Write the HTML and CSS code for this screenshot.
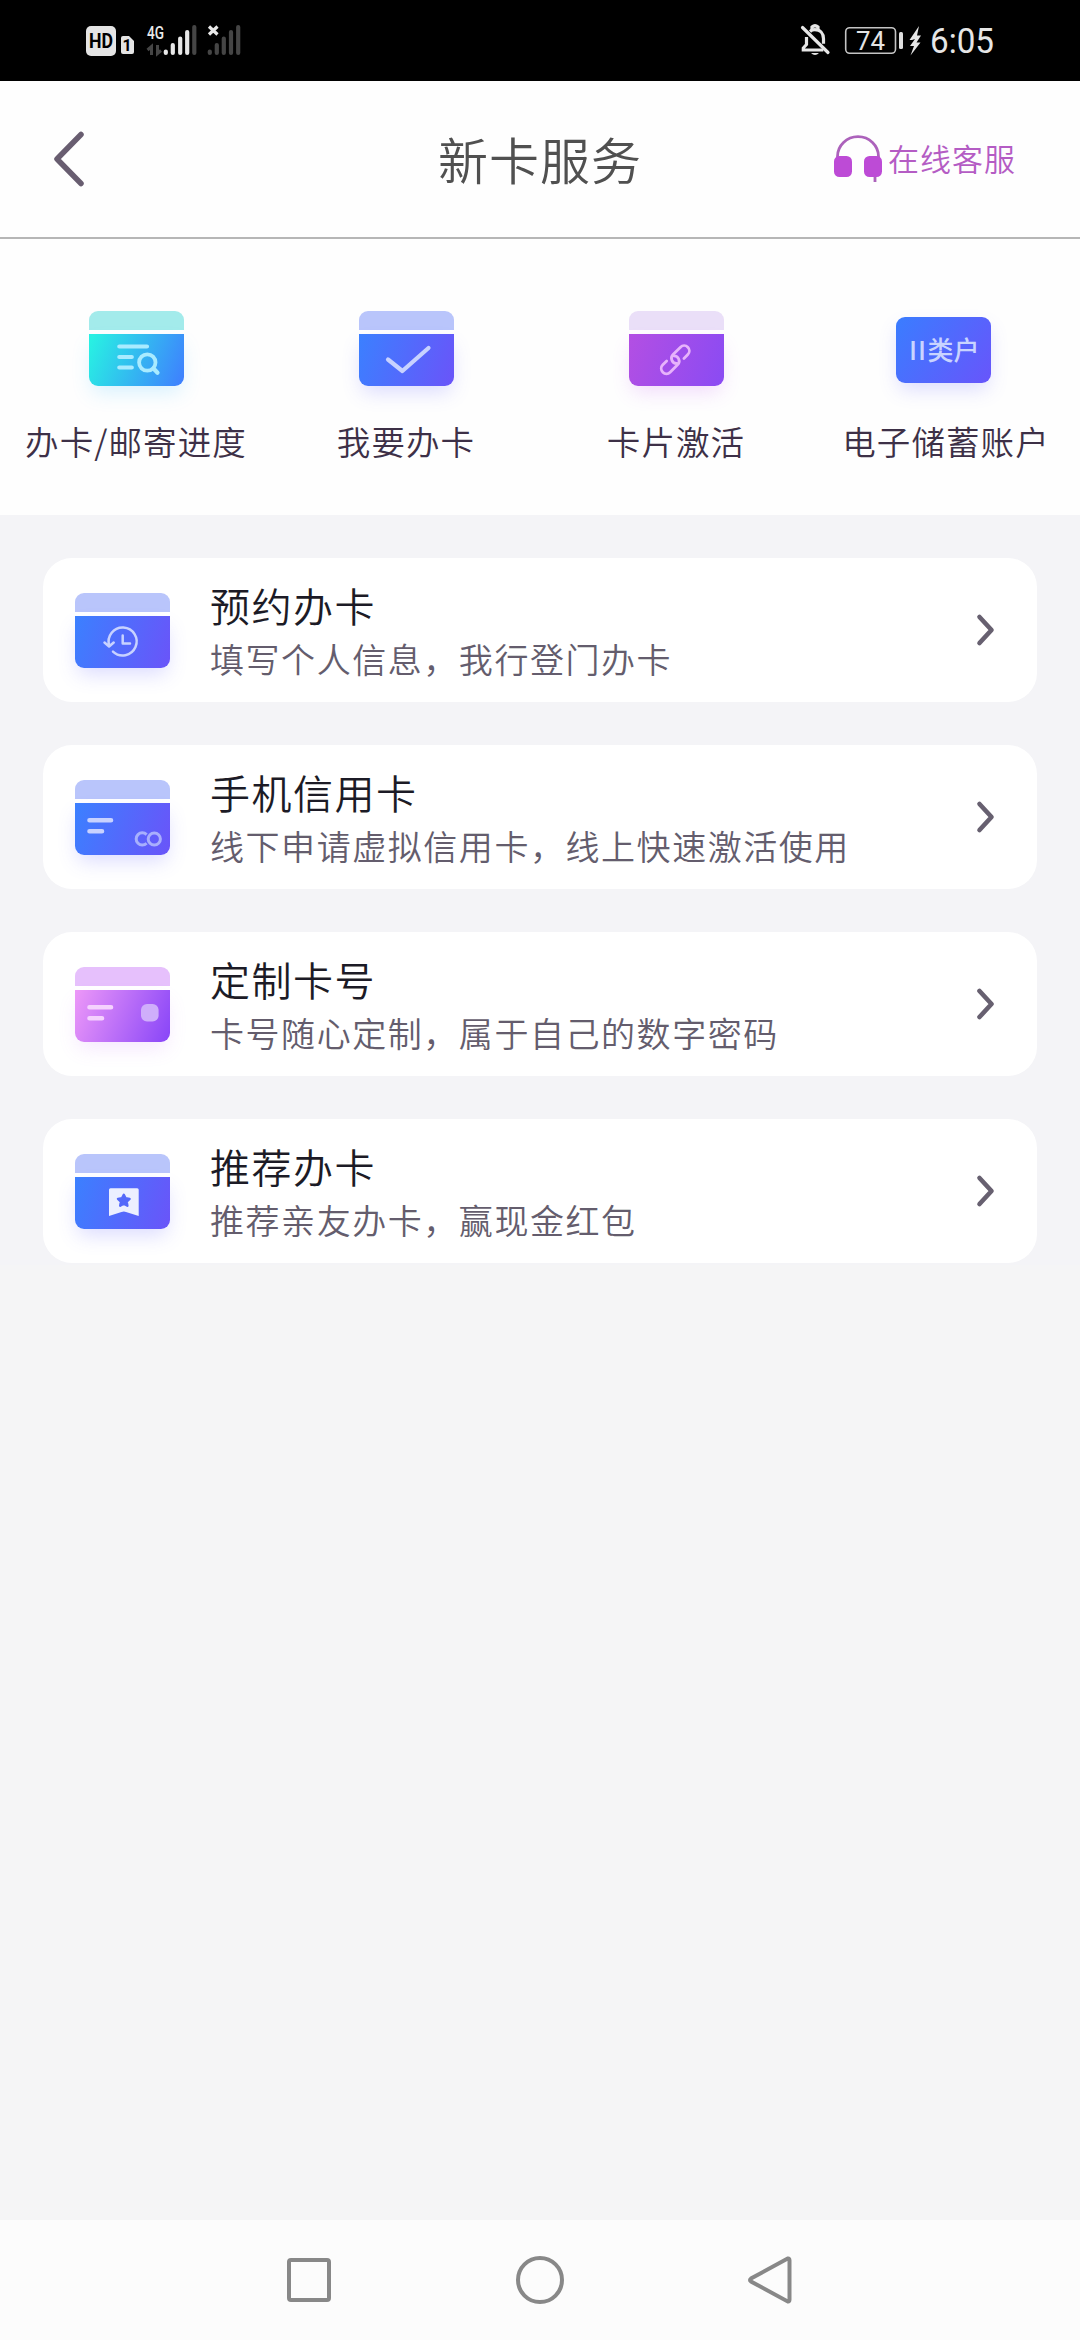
FILE: index.html
```html
<!DOCTYPE html>
<html lang="zh-CN">
<head>
<meta charset="utf-8">
<title>新卡服务</title>
<link rel="stylesheet" href="styles.css">
</head>
<body>
<div class="screen">
  <div class="status">
    <svg class="status-left" width="160" height="40" viewBox="84 20 160 40">
      <rect x="86" y="26" width="30" height="30" rx="5" fill="#e4e4e4"/>
      <text x="101" y="48" class="hd" text-anchor="middle" textLength="24" lengthAdjust="spacingAndGlyphs">HD</text>
      <path d="M123 36h6l5 5v11a2 2 0 0 1-2 2h-9a2 2 0 0 1-2-2V38a2 2 0 0 1 2-2z" fill="#e4e4e4"/>
      <text x="127" y="51" class="sim" text-anchor="middle">1</text>
      <text x="147" y="38.500" class="net" textLength="17" lengthAdjust="spacingAndGlyphs">4G</text>
      <g stroke="#e8e8e8" stroke-width="4.200" stroke-linecap="round">
        <path d="M165.800 51.500v1.500M172.800 45v8M180.200 38.500v14.500M187.200 32v21"/>
        <path d="M194.300 27v26M209.800 51.500v1.500M216.800 45v8M223.800 38.500v14.500M231 32v21M238.200 27v26" stroke="#454545"/>
      </g>
      <path d="M147.500 50l4-3.500v8.500M157.500 45v8.500l3.500-3" fill="none" stroke="#454545" stroke-width="3"/>
      <path d="M209 26.500l8.500 8M217.500 26.500l-8.500 8" stroke="#e8e8e8" stroke-width="3.200"/>
    </svg>
    <svg class="status-right" width="204" height="40" viewBox="796 20 204 40">
      <g fill="none" stroke="#e6e6e6" stroke-width="3.200">
        <path d="M806.500 37v7.500l-3.200 3.500v2h20M810 31.500c1.500-1.400 3-1.800 4.800-1.800 5.500 0 8.700 4 8.700 9v5"/>
        <path d="M802.500 27.500l25.500 25" stroke-linecap="round"/>
        <path d="M812 30v-3q3-2.500 6 0v3" />
      </g>
      <path d="M811 53h8q-4 4-8 0z" fill="#e6e6e6"/>
      <rect x="845.700" y="27.700" width="49.800" height="25.600" rx="4" fill="none" stroke="#c4c4c4" stroke-width="1.600"/>
      <text x="856" y="49.500" class="battery" textLength="29" lengthAdjust="spacingAndGlyphs">74</text>
      <rect x="899" y="32" width="4" height="17" rx="1.500" fill="#dedede"/>
      <path d="M919 26l-9.500 14h5l-2.500 0 3-1-5 7h4l-3.500 9.500 10-13h-4l4.500-7h-4z" fill="#e6e6e6"/>
      <text x="930" y="53" class="time" textLength="64" lengthAdjust="spacingAndGlyphs">6:05</text>
    </svg>
  </div>

  <header class="header">
    <svg class="back" width="36" height="60" viewBox="0 0 36 60"><path d="M30 5.500L6 30l24 24.500"/></svg>
    <h1 class="page-title">新卡服务</h1>
    <a class="support">
      <svg width="50" height="50" viewBox="0 0 50 50">
        <path d="M4.500 24v-1.500a20.500 19.800 0 0 1 41 0V24M42 40v8" fill="none" stroke="#ac62bb" stroke-width="2.800"/>
        <rect x="1" y="22" width="18" height="21" rx="5.500" fill="#bd4bd6"/>
        <rect x="31" y="22" width="18" height="21" rx="5.500" fill="#bd4bd6"/>
      </svg>
      <span>在线客服</span>
    </a>
  </header>

  <nav class="shortcuts">
    <a class="shortcut">
      <div class="tile teal"><i class="strip"></i><i class="face"></i>
        <svg class="glyph" viewBox="0 0 95 75"><path d="M30.300 35.500H58M30.300 46h12.500M30.300 56.500h12.500M64.500 57.500l4 4.200" stroke-width="4.200"/><circle cx="58.300" cy="51.500" r="8.200" stroke-width="3.800"/></svg>
      </div>
      <span class="label">办卡/邮寄进度</span>
    </a>
    <a class="shortcut">
      <div class="tile blue"><i class="strip"></i><i class="face"></i>
        <svg class="glyph" viewBox="0 0 95 75"><path d="M29 48.500L43.400 60 69.500 37" stroke-width="4.200"/></svg>
      </div>
      <span class="label">我要办卡</span>
    </a>
    <a class="shortcut">
      <div class="tile purple"><i class="strip"></i><i class="face"></i>
        <svg class="glyph" viewBox="0 0 95 75"><g transform="translate(46.300 48.700) rotate(-45)" stroke-width="2.800"><path d="M7 5.200H12.500a5.200 5.200 0 0 0 0-10.400H2a5.200 5.200 0 0 0-3.600 9"/><path d="M-7-5.200H-12.500a5.200 5.200 0 0 0 0 10.400H-2a5.200 5.200 0 0 0 3.600-9"/></g></svg>
      </div>
      <span class="label">卡片激活</span>
    </a>
    <a class="shortcut last">
      <div class="tile account"><i class="face"></i>
        <svg class="glyph" viewBox="0 0 95 75"><text class="tile-text" x="13 22 31.500 57.500" y="49">II类户</text></svg>
      </div>
      <span class="label">电子储蓄账户</span>
    </a>
  </nav>

  <main class="list">
    <a class="card">
      <div class="tile blue"><i class="strip"></i><i class="face"></i>
        <svg class="glyph" viewBox="0 0 95 75"><path d="M34.200 52.500A14 14 0 1 1 38 58.700M29.500 49.500l4.600 4 4.600-4M47.700 42.500v8h7.300" stroke-width="2.500"/></svg>
      </div>
      <div class="card-text"><h2>预约办卡</h2><p>填写个人信息，我行登门办卡</p></div>
      <svg class="chevron" width="20" height="34" viewBox="0 0 20 34"><path d="M4.500 4l12 13-12 13"/></svg>
    </a>
    <a class="card">
      <div class="tile blue"><i class="strip"></i><i class="face"></i>
        <svg class="glyph" viewBox="0 0 95 75"><path d="M14.500 40.300h21.500M14.500 51.300h12.500" stroke-width="4.600"/><g opacity=".7" stroke-width="3" stroke-linecap="butt"><path d="M71.600 54.600a6.100 6.100 0 1 0 0 8.600"/><circle cx="79.300" cy="59" r="6.100"/></g></svg>
      </div>
      <div class="card-text"><h2>手机信用卡</h2><p>线下申请虚拟信用卡，线上快速激活使用</p></div>
      <svg class="chevron" width="20" height="34" viewBox="0 0 20 34"><path d="M4.500 4l12 13-12 13"/></svg>
    </a>
    <a class="card">
      <div class="tile pink"><i class="strip"></i><i class="face"></i>
        <svg class="glyph" viewBox="0 0 95 75"><path d="M14.500 40.300h21.500M14.500 51.300h12.500" stroke-width="4.600"/><rect x="66" y="37" width="17.600" height="17.400" rx="6" fill="#cfaefb" stroke="none"/></svg>
      </div>
      <div class="card-text"><h2>定制卡号</h2><p>卡号随心定制，属于自己的数字密码</p></div>
      <svg class="chevron" width="20" height="34" viewBox="0 0 20 34"><path d="M4.500 4l12 13-12 13"/></svg>
    </a>
    <a class="card">
      <div class="tile blue"><i class="strip"></i><i class="face"></i>
        <svg class="glyph" viewBox="0 0 95 75"><path d="M35.500 34.300h26.700a1.500 1.500 0 0 1 1.500 1.500V62L51 57.900q-2-.8-4.500 0L34 62V35.800a1.500 1.500 0 0 1 1.500-1.500z" fill="#ecefff" stroke="none"/><path d="M48.800 40.700l1.800 3.600 4 .6-2.900 2.800.7 4-3.600-1.900-3.600 1.900.7-4-2.900-2.800 4-.6z" fill="#5468fa" stroke="#5468fa" stroke-width="2.400" stroke-linejoin="round"/></svg>
      </div>
      <div class="card-text"><h2>推荐办卡</h2><p>推荐亲友办卡，赢现金红包</p></div>
      <svg class="chevron" width="20" height="34" viewBox="0 0 20 34"><path d="M4.500 4l12 13-12 13"/></svg>
    </a>
  </main>

  <footer class="system-nav">
    <svg width="54" height="54" viewBox="0 0 54 54"><rect x="7" y="7" width="40" height="40" rx="2"/></svg>
    <svg width="54" height="54" viewBox="0 0 54 54"><circle cx="27" cy="27" r="22"/></svg>
    <svg width="54" height="54" viewBox="0 0 54 54"><path d="M43.700 5.500L7 25.500q-2 1.500 0 3l36.700 20q1.800.5 1.800-2v-39q0-2.500-1.800-2z"/></svg>
  </footer>
</div>
</body>
</html>
```
FILE: styles.css
```css
* { box-sizing: border-box; margin: 0; padding: 0; }
body {
  background: #f5f5f6;
  font-family: "Noto Sans CJK SC", sans-serif;
  font-weight: 350;
}
.screen { width: 1080px; height: 2340px; display: flex; flex-direction: column; }
svg { display: block; flex: none; }

.status {
  height: 81px; background: #000; flex: none;
  display: flex; justify-content: space-between; align-items: flex-start;
  padding: 20px 80px 0 84px;
}
.hd { font: 700 20px Roboto, sans-serif; fill: #000; }
.sim { font: 700 16px Roboto, sans-serif; fill: #000; }
.net { font: 500 18.500px Roboto, sans-serif; fill: #e8e8e8; }
.battery { font: 400 25.500px Roboto, sans-serif; fill: #e4e4e4; }
.time { font: 400 34.500px Roboto, sans-serif; fill: #e6e6e6; }

.header {
  height: 158px; flex: none; background: #fefefe;
  border-bottom: 2px solid #b6b6b6;
  display: grid; grid-template-columns: 1fr auto 1fr; align-items: center;
  padding: 0 64px 0 51px;
}
.back { fill: none; stroke: #685d70; stroke-width: 5.500; stroke-linecap: round; stroke-linejoin: round; }
.page-title { font-size: 50px; font-weight: 350; letter-spacing: 1px; line-height: 72px; color: #505050; padding: 0 0 2px 13px; }
.support {
  justify-self: end; display: flex; align-items: center; gap: 5px;
  font-size: 31px; letter-spacing: 1px; line-height: 44px; color: #b45cc4; white-space: nowrap;
}
.support span { padding-bottom: 2px; }

.shortcuts {
  height: 276px; flex: none; background: #fefefe;
  display: grid; grid-template-columns: repeat(4, 270px);
  padding-top: 72px;
}
.shortcut { display: flex; flex-direction: column; align-items: center; gap: 30px; }
.shortcut .tile { margin-left: 2px; }
.shortcut.last .tile { margin-left: -3px; }
.label { font-size: 33.500px; letter-spacing: 1.100px; padding-left: 2px; line-height: 50px; color: #3d3047; white-space: nowrap; }

.tile { width: 95px; height: 75px; display: flex; flex-direction: column; gap: 4px; flex: none; position: relative; }
.strip { height: 19px; border-radius: 9px 9px 0 0; background: #b9c5fb; }
.face { height: 52px; border-radius: 0 0 9px 9px; box-shadow: 0 9px 20px -3px rgba(90, 90, 255, .22); }
.glyph { position: absolute; inset: 0; width: 95px; height: 75px; fill: none; stroke: #c8d2ff; stroke-linecap: round; stroke-linejoin: round; }
.blue .face { background: linear-gradient(108deg, #3b80ff, #6a54f9); }
.teal .face { background: linear-gradient(112deg, #28f0e3 4%, #3f7dff); box-shadow: 0 9px 20px -3px rgba(70, 190, 255, .22); }
.teal .strip { background: #a3ebeb; }
.teal .glyph { stroke: #a9ebff; }
.purple .face { background: linear-gradient(108deg, #b34fe3, #8a4bf3); box-shadow: 0 9px 20px -3px rgba(190, 80, 240, .2); }
.purple .strip { background: #eadff8; }
.purple .glyph { stroke: #e7b3fb; }
.pink .face { background: linear-gradient(112deg, #ed98f8, #8845f8); box-shadow: 0 9px 20px -3px rgba(190, 100, 250, .16); }
.pink .strip { background: #e6c0fc; }
.pink .glyph { stroke: #f5d2fe; }
.account { padding-top: 6px; }
.account .face { height: 66px; border-radius: 9px; background: linear-gradient(125deg, #3a7dff, #6855fb); }
.tile-text { font-size: 26px; font-weight: 500; fill: #c9d4ff; stroke: none; }

.list { flex: 1; padding: 43px 43px 0; display: flex; flex-direction: column; gap: 43px; background: linear-gradient(#f4f4f7 750px, #f5f5f6 750px); }
.card {
  height: 144px; flex: none; background: #fff; border-radius: 29px;
  display: flex; align-items: center; padding: 0 42px 0 32px;
}
.card-text { flex: 1; margin-left: 40px; padding-top: 4px; }
.card h2 { font-size: 40px; font-weight: 350; letter-spacing: 1.500px; line-height: 54px; color: #1c1b26; }
.card p { font-size: 34px; letter-spacing: 1.550px; line-height: 54px; color: #645d6d; }
.chevron { fill: none; stroke: #676070; stroke-width: 4.600; stroke-linecap: round; stroke-linejoin: round; }

.system-nav {
  height: 120px; flex: none; background: #fcfcfc;
  display: flex; justify-content: center; align-items: center; gap: 177px;
}
.system-nav svg { fill: none; stroke: #888; stroke-width: 4; }
```
